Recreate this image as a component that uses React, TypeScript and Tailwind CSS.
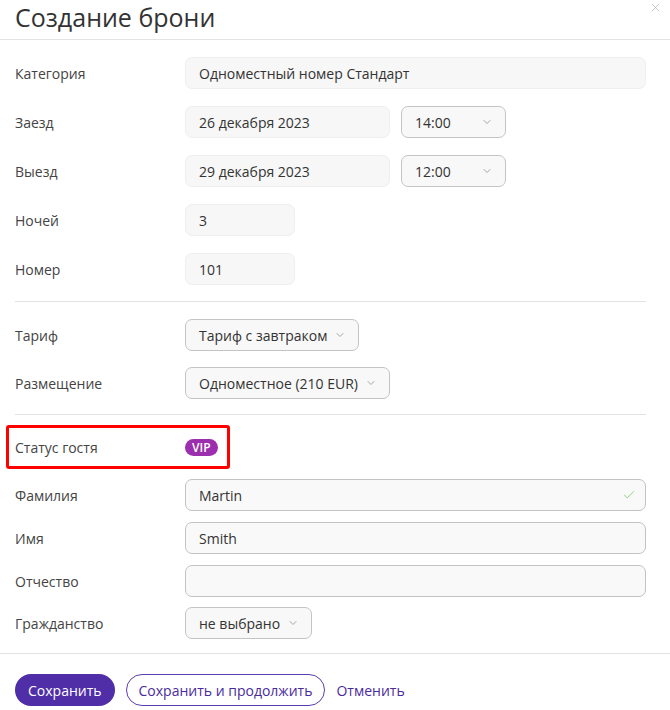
import { Check, ChevronDown, X } from 'lucide-react';

const font = { fontFamily: '"Open Sans", "Noto Sans", sans-serif' };

function Row({ label, children, className = '' }: { label: string; children: React.ReactNode; className?: string }) {
    return (
        <div className={`flex items-center h-[32px] ${className}`}>
            <div className="w-[170px] shrink-0 text-[14px] text-[#444]">{label}</div>
            {children}
        </div>
    );
}

function Field({ value, className = '' }: { value: string; className?: string }) {
    return (
        <div className={`h-[32px] flex items-center px-[13px] rounded-[7px] bg-[#f7f7f7] border border-[#efefef] text-[14px] text-[#333] ${className}`}>
            {value}
        </div>
    );
}

function Select({ value, className = '' }: { value: string; className?: string }) {
    return (
        <div className={`h-[32px] flex items-center justify-between gap-[7px] pl-[13px] pr-[12px] rounded-[7px] bg-[#f8f8f8] border border-[#c4c4c4] text-[14px] text-[#333] ${className}`}>
            <span>{value}</span>
            <ChevronDown className="w-[12px] h-[12px] text-[#8f8f8f]" strokeWidth={1.6} />
        </div>
    );
}

function Input({ value = '', valid = false }: { value?: string; valid?: boolean }) {
    return (
        <div className="flex-1 h-[32px] flex items-center justify-between px-[13px] rounded-[7px] bg-[#f9f9f9] border border-[#c2c2c2] text-[14px] text-[#333]">
            <span>{value}</span>
            {valid && <Check className="w-[14px] h-[14px] text-[#8fcf7a] -mr-[4px]" strokeWidth={1.6} />}
        </div>
    );
}

export default function App() {
    return (
        <div className="w-[670px] h-[710px] bg-white overflow-hidden" style={font}>
            {/* Header */}
            <div className="relative h-[40px] border-b border-[#e3e3e3] px-[15px]">
                <h1 className="text-[25px] leading-[35px] text-[#333] font-normal">Создание брони</h1>
                <X className="absolute top-[1px] right-[8px] w-[13px] h-[13px] text-[#aaa]" strokeWidth={1.2} />
            </div>

            <div className="pl-[15px] pr-[24px]">
                {/* Dates */}
                <div className="pt-[17px] flex flex-col gap-[17px]">
                    <Row label="Категория">
                        <Field value="Одноместный номер Стандарт" className="flex-1" />
                    </Row>
                    <Row label="Заезд">
                        <Field value="26 декабря 2023" className="w-[205px]" />
                        <Select value="14:00" className="w-[105px] ml-[11px]" />
                    </Row>
                    <Row label="Выезд">
                        <Field value="29 декабря 2023" className="w-[205px]" />
                        <Select value="12:00" className="w-[105px] ml-[11px]" />
                    </Row>
                    <Row label="Ночей">
                        <Field value="3" className="w-[110px]" />
                    </Row>
                    <Row label="Номер">
                        <Field value="101" className="w-[110px]" />
                    </Row>
                </div>

                <div className="mt-[16px] border-t border-[#e3e3e3]" />

                {/* Rate */}
                <div className="pt-[17px] flex flex-col gap-[16px]">
                    <Row label="Тариф">
                        <Select value="Тариф с завтраком" />
                    </Row>
                    <Row label="Размещение">
                        <Select value="Одноместное (210 EUR)" />
                    </Row>
                </div>

                <div className="mt-[15px] border-t border-[#e3e3e3]" />

                {/* Guest status, highlighted */}
                <div className="mt-[10px] -ml-[9px] w-[224px] h-[44px] border-[3px] border-[#ff0000] rounded-[3px] pl-[6px] flex items-center">
                    <div className="w-[170px] shrink-0 text-[14px] text-[#444]">Статус гостя</div>
                    <span className="h-[17px] px-[7px] rounded-full bg-[#9c2fae] text-white text-[12px] leading-[17px] font-semibold">VIP</span>
                </div>

                {/* Guest */}
                <div className="mt-[10px] flex flex-col gap-[11px]">
                    <Row label="Фамилия">
                        <Input value="Martin" valid />
                    </Row>
                    <Row label="Имя">
                        <Input value="Smith" />
                    </Row>
                    <Row label="Отчество">
                        <Input />
                    </Row>
                    <Row label="Гражданство" className="-mt-[1px]">
                        <Select value="не выбрано" />
                    </Row>
                </div>
            </div>

            {/* Footer */}
            <div className="mt-[14px] border-t border-[#e3e3e3] px-[15px] pt-[20px] flex items-center">
                <button className="h-[32px] px-[13px] rounded-full bg-[#4f2ea7] text-white text-[14px]">Сохранить</button>
                <button className="ml-[11px] h-[32px] px-[12px] rounded-full border border-[#5b3db2] text-[#4a2b9e] text-[14px]">Сохранить и продолжить</button>
                <button className="ml-[11px] text-[#4a2b9e] text-[14px]">Отменить</button>
            </div>
        </div>
    );
}
